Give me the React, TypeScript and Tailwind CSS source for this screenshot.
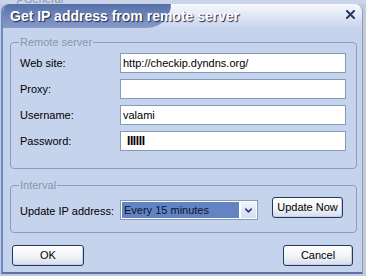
import { Fragment } from "react";
import { ChevronDown } from "lucide-react";

const fields = [
  { label: "Web site:", value: "http://checkip.dyndns.org/" },
  { label: "Proxy:", value: "" },
  { label: "Username:", value: "valami" },
];

function XpButton({ label, w }: { label: string; w: string }) {
  return (
    <button
      className={`${w} h-[21px] rounded-[3px] border border-[#21386a] bg-gradient-to-b from-white via-[#f3f5f9] to-[#d6deeb] text-[11px] leading-none text-black shadow-[inset_-1px_-1px_0_#c5cfe0]`}
    >
      {label}
    </button>
  );
}

export default function App() {
  return (
    <div className="w-[366px] h-[276px] overflow-hidden bg-[#c2cadb] font-['Liberation_Sans',Arial,sans-serif] text-[11px] text-black">
      {/* parent window peeking out above the dialog */}
      <div className="h-[4px] overflow-hidden bg-[#c9d4e8]">
        <div className="-mt-[7px] ml-[17px] mr-[24px] flex items-center gap-[2px] leading-[13px] text-[#8a95ab]">
          <span className="self-end w-[5px] h-[6px] border-l border-t border-[#8c9cbc] rounded-tl-[3px]" />
          <span>General</span>
          <span className="flex-1 h-px bg-[#8c9cbc]" />
        </div>
      </div>

      {/* dialog */}
      <div className="ml-[1px] w-[362px] h-[270px] flex flex-col rounded-t-[8px] overflow-hidden bg-[#c6d3ec] border-l-2 border-l-[#6d89c6] border-r border-r-[#8f9cb6] border-b-2 border-b-[#5d72a0]">
        {/* title bar */}
        <div className="h-[24px] flex bg-gradient-to-b from-[#f7f9fd] to-[#c8d4ec]">
          <div className="w-[168px] rounded-br-[26px] bg-gradient-to-b from-[#5670a9] to-[#879cca] flex items-center pl-[7px]">
            <span className="whitespace-nowrap text-[14px] font-bold text-white [text-shadow:1px_1px_1px_#1b2850]">
              Get IP address from remote server
            </span>
          </div>
          <svg className="ml-auto mr-[7px] mt-[6px]" width="9" height="9" viewBox="0 0 9 9">
            <path d="M1 1 L8 8 M8 1 L1 8" stroke="#2b3768" strokeWidth="2" strokeLinecap="square" />
          </svg>
        </div>

        <div className="flex-1 flex flex-col pl-[7px] pr-[5px]">
          {/* Remote server */}
          <fieldset className="mt-[8px] border border-[#8c9cbc] rounded-[4px] pl-[9px] pr-[10px] pt-[4px] pb-[17px]">
            <legend className="-ml-[1px] px-[1px] leading-[13px] text-[#8a95ab]">Remote server</legend>
            <div className="grid grid-cols-[100px_1fr] items-center gap-y-[6px]">
              {fields.map((f) => (
                <Fragment key={f.label}>
                  <span>{f.label}</span>
                  <input
                    readOnly
                    value={f.value}
                    className="h-[20px] w-full border border-[#7f9db9] bg-white px-[2px] text-[11px] outline-none"
                  />
                </Fragment>
              ))}
              <span>Password:</span>
              <div className="h-[20px] border border-[#7f9db9] bg-white pl-[6px] flex items-center">
                <span className="font-bold text-[12px] tracking-[-0.4px]">IIIIII</span>
              </div>
            </div>
          </fieldset>

          {/* Interval */}
          <fieldset className="mt-[10px] border border-[#8c9cbc] rounded-[4px] pl-[9px] pr-[13px] pt-[5px] pb-[12px]">
            <legend className="-ml-[1px] px-[1px] leading-[13px] text-[#8a95ab]">Interval</legend>
            <div className="flex items-start">
              <span className="w-[100px] mt-[6px]">Update IP address:</span>
              <div className="mt-[3px] w-[138px] h-[20px] border border-[#7f9db9] bg-white p-[1px] flex gap-[2px]">
                <div className="flex-1 bg-[#6383c3] flex items-center pl-[2px] text-[#0b1430]">Every 15 minutes</div>
                <div className="w-[15px] bg-gradient-to-b from-[#f2f5fb] to-[#d3dced] flex items-center justify-center">
                  <ChevronDown size={11} strokeWidth={3.5} color="#23407e" />
                </div>
              </div>
              <div className="ml-auto">
                <XpButton label="Update Now" w="w-[71px]" />
              </div>
            </div>
          </fieldset>

          <div className="mt-[12px] flex justify-between pl-[2px] pr-[4px]">
            <XpButton label="OK" w="w-[72px]" />
            <XpButton label="Cancel" w="w-[70px]" />
          </div>
        </div>
      </div>
    </div>
  );
}
